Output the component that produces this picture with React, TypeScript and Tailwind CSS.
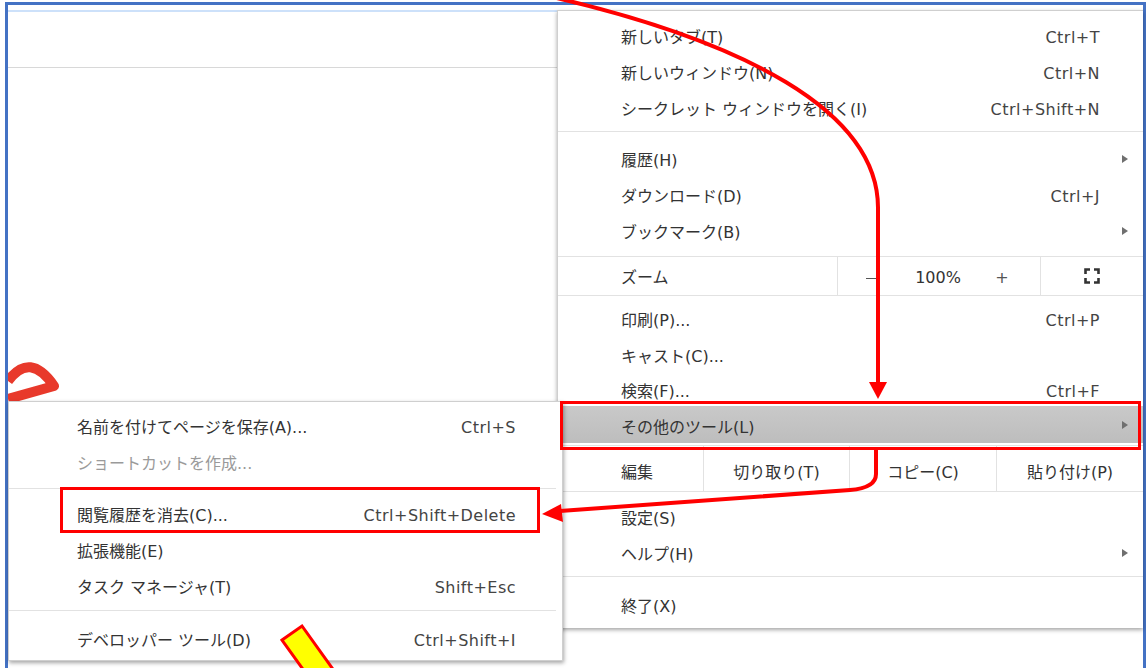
import React from 'react'

type Item = { label: string; keys?: string; sub?: boolean; cls?: string; dim?: boolean }

// Chrome メインメニュー
const TOP: Item[] = [
  { label: '新しいタブ(T)', keys: 'Ctrl+T' },
  { label: '新しいウィンドウ(N)', keys: 'Ctrl+N' },
  { label: 'シークレット ウィンドウを開く(I)', keys: 'Ctrl+Shift+N' },
]
const HISTORY: Item[] = [
  { label: '履歴(H)', sub: true },
  { label: 'ダウンロード(D)', keys: 'Ctrl+J' },
  { label: 'ブックマーク(B)', sub: true },
]
const PRINT: Item[] = [
  { label: '印刷(P)...', keys: 'Ctrl+P' },
  { label: 'キャスト(C)...' },
  { label: '検索(F)...', keys: 'Ctrl+F', cls: 'h-[33px]' },
]
const SETTINGS: Item[] = [
  { label: '設定(S)' },
  { label: 'ヘルプ(H)', sub: true },
]

// その他のツール サブメニュー
const TOOLS_A: Item[] = [
  { label: '名前を付けてページを保存(A)...', keys: 'Ctrl+S' },
  { label: 'ショートカットを作成...', dim: true },
]
const TOOLS_B: Item[] = [
  { label: '閲覧履歴を消去(C)...', keys: 'Ctrl+Shift+Delete' },
  { label: '拡張機能(E)' },
  { label: 'タスク マネージャ(T)', keys: 'Shift+Esc' },
]

function Arrow() {
  return <span className="w-0 h-0 border-y-[4px] border-y-transparent border-l-[6px] border-l-[#6f6f6f]" />
}

function MenuRow({ item }: { item: Item }) {
  return (
    <div className={`flex items-center pt-[4px] pl-[63px] pr-[15px] ${item.cls ?? 'h-9'}`}>
      <span className="flex-1">{item.label}</span>
      {item.keys && <span className="mr-[28px] tracking-[0.03em] text-[#444]">{item.keys}</span>}
      {item.sub && <span className="-mt-[4px] flex"><Arrow /></span>}
    </div>
  )
}

function SubRow({ item }: { item: Item }) {
  return (
    <div className="flex items-center h-9 pt-[4px] pl-[68px] pr-[46px]">
      <span className={`flex-1 ${item.dim ? 'text-[#9a9a9a]' : ''}`}>{item.label}</span>
      {item.keys && <span className="tracking-[0.03em] text-[#444]">{item.keys}</span>}
    </div>
  )
}

const Sep = () => <div className="h-px bg-[#e2e2e2]" />

function FullscreenIcon() {
  return (
    <svg width="16" height="16" viewBox="0 0 16 16" fill="none" stroke="#333" strokeWidth="2.6">
      <path d="M1.5 6V1.5H6M10 1.5h4.5V6M14.5 10v4.5H10M6 14.5H1.5V10" />
    </svg>
  )
}

function MainMenu() {
  return (
    <div className="mt-[5px] h-[618px] bg-white border-l border-t border-[#cfcfcf] shadow-[0_2px_4px_rgba(0,0,0,0.35)]">
      <div className="pt-[7px] pb-[5px]">
        {TOP.map(i => <MenuRow key={i.label} item={i} />)}
      </div>
      <Sep />
      <div className="pt-[9px] pb-[7px]">
        {HISTORY.map(i => <MenuRow key={i.label} item={i} />)}
      </div>
      <Sep />
      {/* ズーム */}
      <div className="flex h-[38px] items-center">
        <div className="w-[279px] pl-[63px] pt-[4px]">ズーム</div>
        <div className="flex h-full w-[203px] items-center border-l border-[#e2e2e2] pt-[4px]">
          <span className="flex w-[68px] justify-center"><span className="h-px w-[12px] bg-[#555]" /></span>
          <span className="w-[64px] text-center">100%</span>
          <span className="w-[64px] text-center text-[#555]">+</span>
        </div>
        <div className="flex h-full flex-1 items-center justify-center border-l border-[#e2e2e2]">
          <FullscreenIcon />
        </div>
      </div>
      <Sep />
      <div className="pt-[5px]">
        {PRINT.map(i => <MenuRow key={i.label} item={i} />)}
        <div className="flex h-[37px] items-center bg-gradient-to-b from-[#c9c9c9] to-[#bdbdbd] pt-[6px] pl-[63px] pr-[15px]">
          <span className="flex-1">その他のツール(L)</span>
          <span className="-mt-[6px] flex"><Arrow /></span>
        </div>
      </div>
      <div className="mt-[2px]">
        <Sep />
      </div>
      {/* 編集 */}
      <div className="flex h-[45px] items-center">
        <div className="w-[145px] pl-[63px] pt-[8px]">編集</div>
        <div className="flex h-full w-[146px] items-center justify-center border-l border-[#e2e2e2] pt-[8px]">切り取り(T)</div>
        <div className="flex h-full w-[147px] items-center justify-center border-l border-[#e2e2e2] pt-[8px]">コピー(C)</div>
        <div className="flex h-full flex-1 items-center justify-center border-l border-[#e2e2e2] pt-[8px]">貼り付け(P)</div>
      </div>
      <Sep />
      <div className="pt-[7px] pb-[5px]">
        {SETTINGS.map(i => <MenuRow key={i.label} item={i} />)}
      </div>
      <Sep />
      <div className="pt-[10px]">
        <MenuRow item={{ label: '終了(X)' }} />
      </div>
    </div>
  )
}

function ToolsMenu() {
  return (
    <div className="absolute left-[8px] top-[401px] w-[555px] h-[260px] bg-white border border-[#cfcfcf] shadow-[1px_2px_4px_rgba(0,0,0,0.35)]">
      <div className="pt-[6px] pb-[8px]">
        {TOOLS_A.map(i => <SubRow key={i.label} item={i} />)}
      </div>
      <div className="mr-[6px]"><Sep /></div>
      <div className="pt-[7px] pb-[6px]">
        {TOOLS_B.map(i => <SubRow key={i.label} item={i} />)}
      </div>
      <div className="mr-[6px]"><Sep /></div>
      <div className="pt-[10px]">
        <SubRow item={{ label: 'デベロッパー ツール(D)', keys: 'Ctrl+Shift+I' }} />
      </div>
    </div>
  )
}

// 赤い矢印・枠と黄色い矢印
function Marks() {
  return (
    <svg className="absolute left-0 top-0 pointer-events-none" width="1146" height="668" viewBox="0 0 1146 668" fill="none">
      <path d="M548 -4C740 40 880 110 878 210L878 385" stroke="#ff0000" strokeWidth="4" />
      <path d="M869 382H887L878 399Z" fill="#ff0000" />
      <rect x="561.5" y="402.5" width="578" height="46" stroke="#ff0000" strokeWidth="3" />
      <path d="M876 450V474Q876 488 850 490L560 511" stroke="#ff0000" strokeWidth="4" />
      <path d="M542 514L561 504L563 522Z" fill="#ff0000" />
      <rect x="61.5" y="488.5" width="477" height="43" stroke="#ff0000" strokeWidth="3" />
      <path d="M282 640L302 626L345 686L325 700Z" fill="#ffff00" stroke="#ff0000" strokeWidth="3" />
    </svg>
  )
}

export default function App() {
  return (
    <div className="relative w-[1146px] h-[668px] overflow-hidden bg-white text-[16px] text-[#333] font-['DejaVu_Sans','Noto_Sans_CJK_JP',sans-serif]">
      <div className="ml-[5px] mt-[2px] w-[1141px] h-[700px] border-[3px] border-b-0 border-[#4472c4] flex">
        {/* ページ側 */}
        <div className="w-[549px]">
          <div className="pt-[5px]">
            <div className="h-[2px] bg-[#cde1fa]" />
            <div className="h-[56px] border-b border-[#d8d8d8]" />
          </div>
          <svg className="mt-[289px]" width="60" height="50" viewBox="0 0 60 50" fill="none">
            <path d="M0 24Q22 -6 46 29L0 42" stroke="#e8392b" strokeWidth="10" strokeLinejoin="round" />
          </svg>
        </div>
        <div className="flex-1">
          <MainMenu />
        </div>
      </div>
      <ToolsMenu />
      <Marks />
    </div>
  )
}
